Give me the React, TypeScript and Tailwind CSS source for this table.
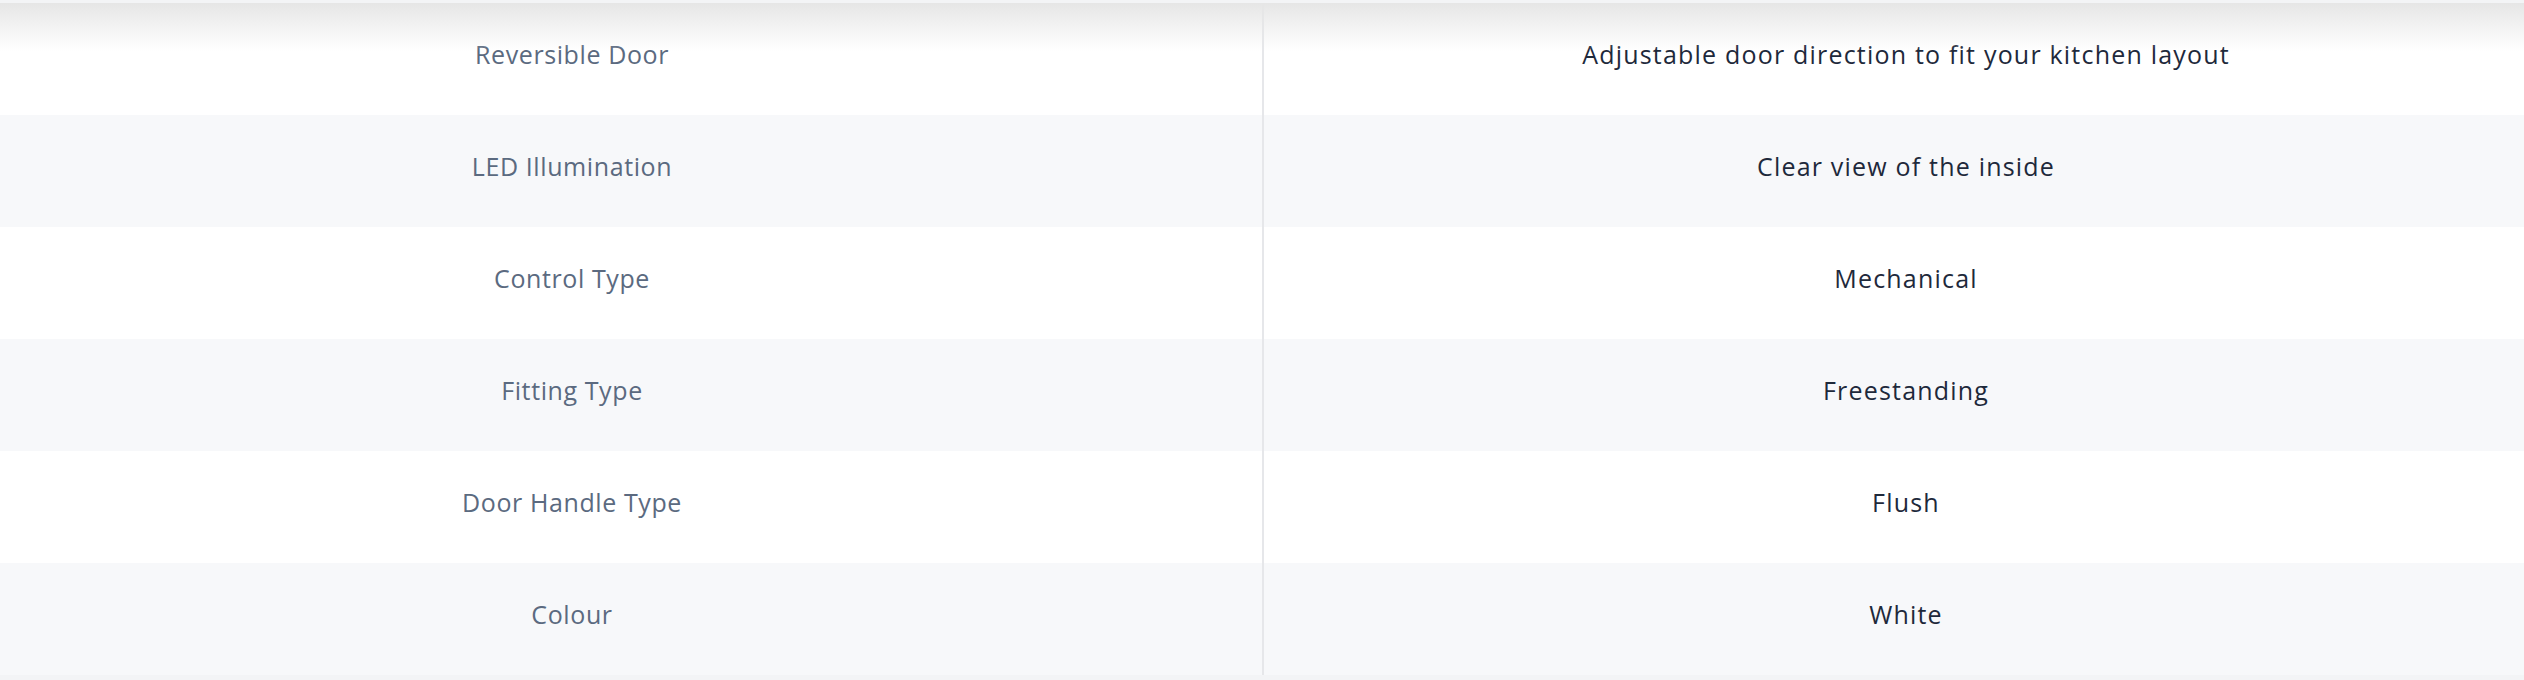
import React from 'react';

interface SpecRow {
  label: string;
  value: string;
}

const specs: SpecRow[] = [
  { label: 'Reversible Door', value: 'Adjustable door direction to fit your kitchen layout' },
  { label: 'LED Illumination', value: 'Clear view of the inside' },
  { label: 'Control Type', value: 'Mechanical' },
  { label: 'Fitting Type', value: 'Freestanding' },
  { label: 'Door Handle Type', value: 'Flush' },
  { label: 'Colour', value: 'White' },
];

const App: React.FC = () => {
  return (
    <div className="w-full h-[680px] bg-[#f3f4f6] pt-[3px] font-['Open_Sans',sans-serif] overflow-hidden">
      <div className="relative bg-white">
        {/* Table rows */}
        {specs.map((row, i) => (
          <div
            key={row.label}
            className={`flex h-[112px] ${i % 2 === 1 ? 'bg-[#f7f8fa]' : 'bg-white'}`}
          >
            <div className="w-[1264px] shrink-0 flex items-center justify-center pr-[118px] pb-[9px] border-r-2 border-[#e6e7ea] text-[25px] tracking-[0.6px] text-[#5b6a80]">
              {row.label}
            </div>
            <div className="flex-1 flex items-center justify-center pl-[24px] pb-[9px] text-[25px] tracking-[1.2px] text-[#1e293b]">
              {row.value}
            </div>
          </div>
        ))}

        {/* Top shade */}
        <div className="absolute inset-x-0 top-0 h-[48px] bg-gradient-to-b from-[#e6e6e6] to-transparent pointer-events-none" />
      </div>
    </div>
  );
};

export default App;
